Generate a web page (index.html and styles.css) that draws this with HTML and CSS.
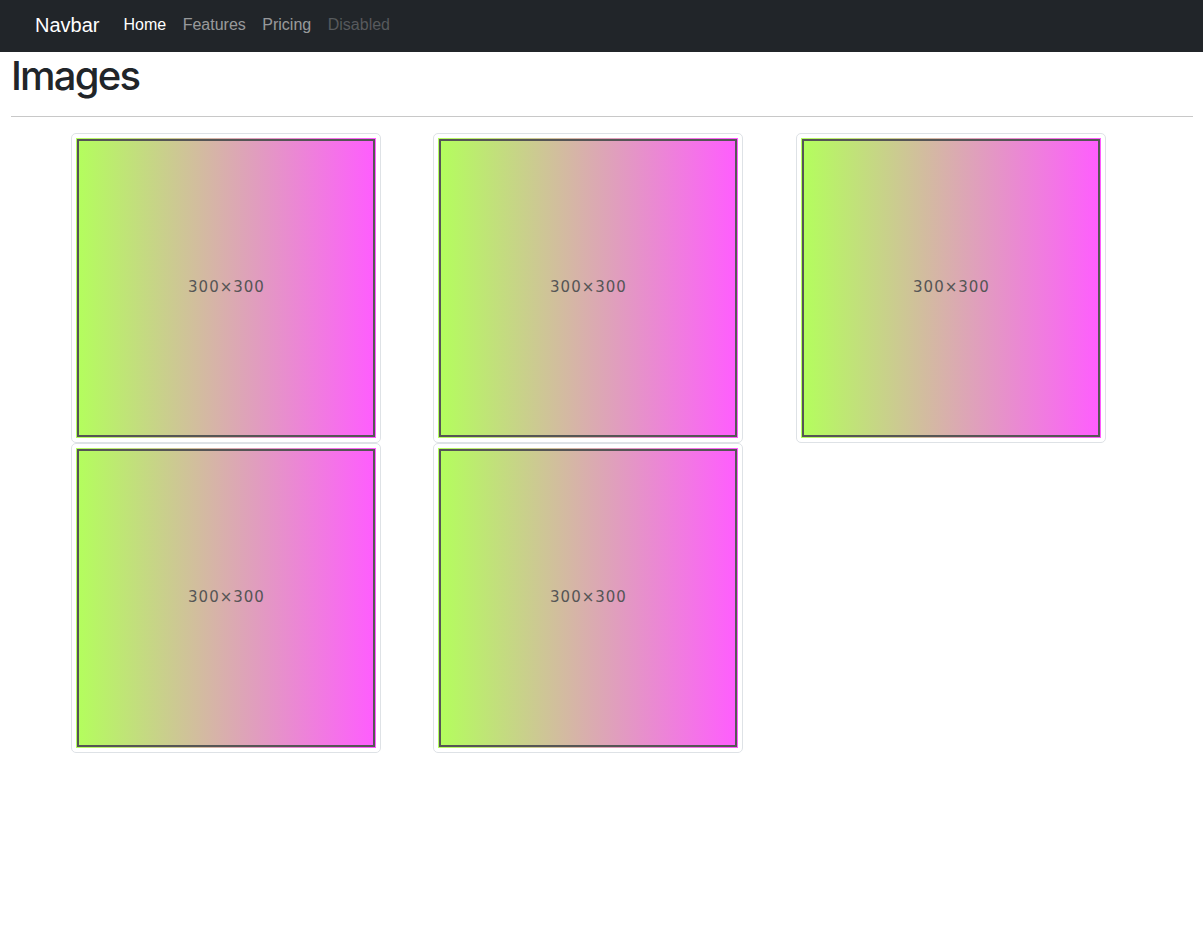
FILE: index.html
```html
<!DOCTYPE html>
<html lang="en">
<head>
<meta charset="utf-8">
<title>Images</title>
<link rel="stylesheet" href="styles.css">
</head>
<body>
<nav class="navbar">
  <a class="brand" href="#">Navbar</a>
  <ul class="nav">
    <li><a class="nav-link active" href="#">Home</a></li>
    <li><a class="nav-link" href="#">Features</a></li>
    <li><a class="nav-link" href="#">Pricing</a></li>
    <li><a class="nav-link disabled">Disabled</a></li>
  </ul>
</nav>
<main class="container">
  <h1 class="title">Images</h1>
  <hr class="rule">
  <div class="gallery">
    <div class="thumb"><div class="ph"><span>300×300</span></div></div>
    <div class="thumb"><div class="ph"><span>300×300</span></div></div>
    <div class="thumb"><div class="ph"><span>300×300</span></div></div>
    <div class="thumb"><div class="ph"><span>300×300</span></div></div>
    <div class="thumb"><div class="ph"><span>300×300</span></div></div>
  </div>
</main>
</body>
</html>
```
FILE: styles.css
```css
* { box-sizing: border-box; }
html, body { margin: 0; padding: 0; }
body {
  font-family: "Liberation Sans", Arial, sans-serif;
  color: #212529;
  background: #fff;
}
.navbar {
  height: 52px;
  background: #212529;
  display: flex;
  align-items: center;
  padding: 0 0 2px 35px;
}
.brand {
  color: #fff;
  font-size: 20px;
  text-decoration: none;
  margin-right: 16px;
  line-height: 30px;
}
.nav {
  display: flex;
  list-style: none;
  margin: 0;
  padding: 0;
}
.nav-link {
  display: block;
  padding: 0 8.25px;
  font-size: 16px;
  line-height: 24px;
  color: rgba(255,255,255,.55);
  text-decoration: none;
}
.nav-link.active { color: #fff; padding-left: 8px; }
.nav-link.disabled { color: rgba(255,255,255,.25); }
.container {
  padding: 0 10px 0 11px;
}
.title {
  margin: 0;
  font-family: Inter, "Liberation Sans", sans-serif;
  font-size: 40px;
  font-weight: 500;
  letter-spacing: -1.8px;
  line-height: 48px;
}
.rule {
  margin: 16px 0;
  border: 0;
  border-top: 1px solid #c8c8c8;
  height: 0;
}
.gallery {
  display: grid;
  grid-template-columns: 362px 363px 310px;
  row-gap: 0;
  padding-left: 60px;
}
.thumb {
  width: 310px;
  height: 310px;
  padding: 4px;
  border: 1px solid #dee2e6;
  border-radius: 5px;
  background: #fff;
}
.ph {
  width: 300px;
  height: 300px;
  background: linear-gradient(to right, #b3ff5c, #ff5cff);
  outline: 2px solid #555;
  outline-offset: -3px;
  display: flex;
  align-items: center;
  justify-content: center;
  padding-bottom: 2px;
}
.ph span {
  font-family: "DejaVu Sans", sans-serif;
  font-size: 15px;
  letter-spacing: 1px;
  color: #555;
  padding-left: 1px;
}
```
